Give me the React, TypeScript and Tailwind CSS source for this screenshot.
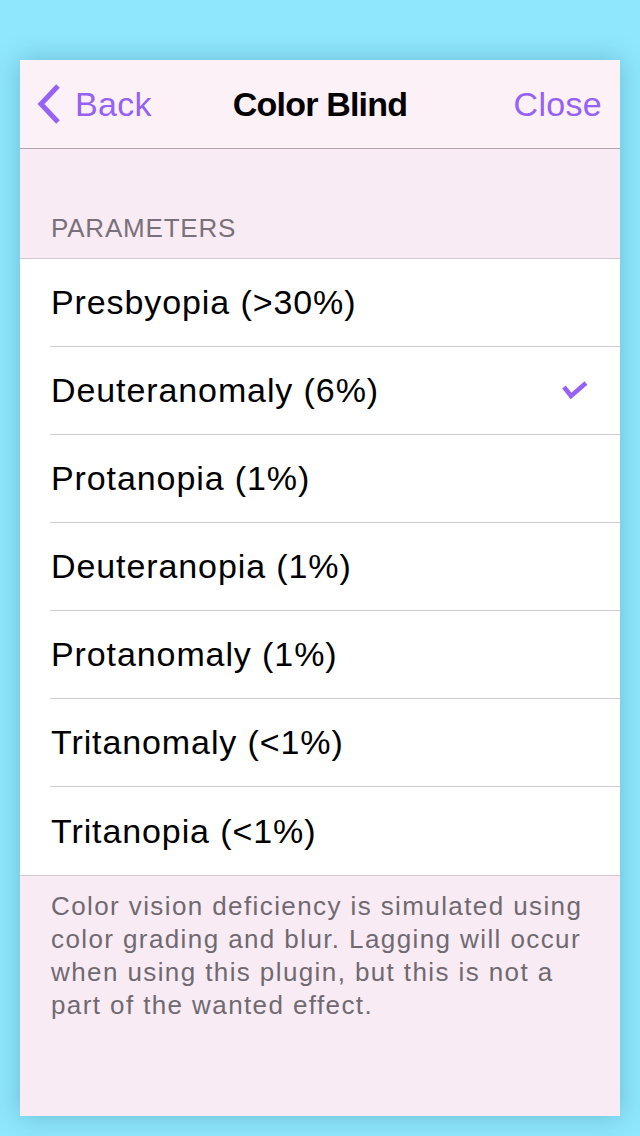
const options = [
  'Presbyopia (>30%)',
  'Deuteranomaly (6%)',
  'Protanopia (1%)',
  'Deuteranopia (1%)',
  'Protanomaly (1%)',
  'Tritanomaly (<1%)',
  'Tritanopia (<1%)',
];

export default function App() {
  const selected = 1;

  return (
    <div
      className="min-h-screen bg-[#8ee7fc] px-5 pt-[60px] pb-5"
      style={{ fontFamily: '"Liberation Sans", Arial, sans-serif' }}
    >
      <div className="flex h-[1056px] flex-col bg-[#f9ebf4] shadow-[0_0_24px_rgba(0,60,90,0.25)]">
        {/* Nav bar */}
        <div className="relative flex h-[89px] shrink-0 items-center justify-between border-b border-[#aea6aa] bg-[#fcf1f6]">
          <button className="flex items-center gap-[13px] pl-4 text-[34px] text-[#9561f6]">
            <svg width="26" height="42" viewBox="0 0 26 42" fill="none">
              <path d="M22 3 L5 21 L22 39" stroke="#9561f6" strokeWidth="5" />
            </svg>
            <span className="tracking-[0.3px]">Back</span>
          </button>
          <div className="absolute left-1/2 -translate-x-1/2 text-[34px] font-bold tracking-[-0.8px] text-black">
            Color Blind
          </div>
          <button className="pr-[18px] text-[34px] tracking-[0.3px] text-[#9561f6]">Close</button>
        </div>

        {/* Section header */}
        <div className="flex h-[109px] shrink-0 items-end px-[31px] pb-[10px] text-[26px] tracking-[0.8px] text-[#79717a]">
          PARAMETERS
        </div>

        {/* Options */}
        <div className="border-y border-[#d4cacf] bg-white">
          {options.map((opt, i) => (
            <div key={opt} className="flex h-[88px] items-stretch pl-[30px]">
              <div
                className={`flex flex-1 items-center justify-between pl-px pr-[31px] text-[34px] tracking-[0.9px] text-black ${
                  i < options.length - 1 ? 'border-b border-[#d4cacf]' : ''
                }`}
              >
                <span>{opt}</span>
                {i === selected && (
                  <svg width="28" height="22" viewBox="0 0 28 22" fill="none">
                    <path d="M3 7 L10 16 L25 3" stroke="#9561f6" strokeWidth="4.5" />
                  </svg>
                )}
              </div>
            </div>
          ))}
        </div>

        {/* Footer */}
        <p className="px-[31px] pt-[14px] text-[26px] leading-[33px] tracking-[1.4px] text-[#6f6a71]">
          Color vision deficiency is simulated using color grading and blur. Lagging will occur
          when using this plugin, but this is not a part of the wanted effect.
        </p>
      </div>
    </div>
  );
}
